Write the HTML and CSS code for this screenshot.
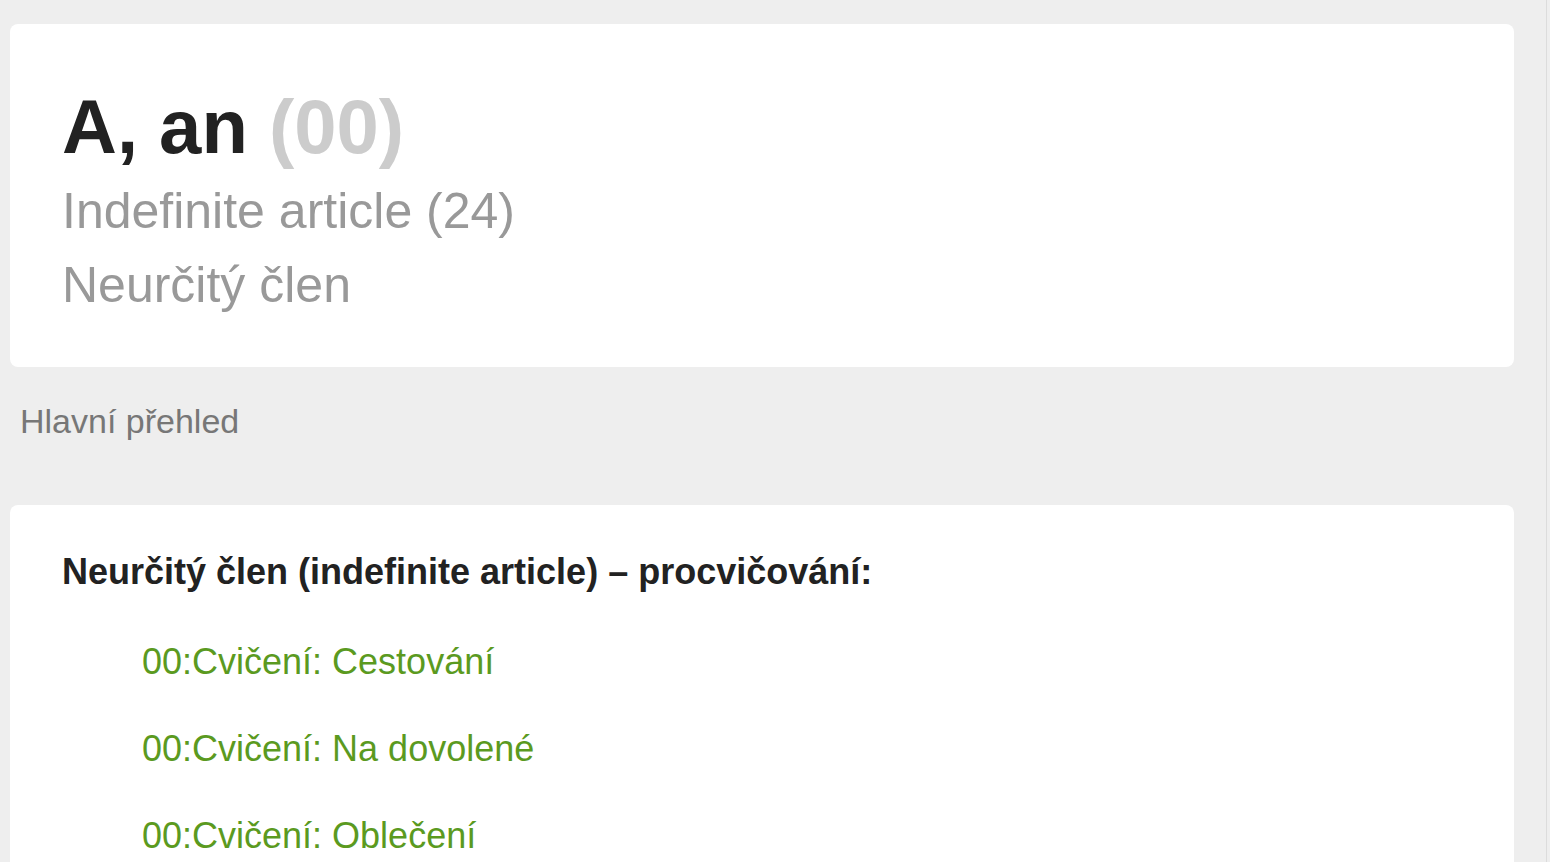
FILE: index.html
```html
<!DOCTYPE html>
<html lang="cs">
<head>
<meta charset="utf-8">
<title>A, an</title>
<link rel="stylesheet" href="styles.css">
</head>
<body>
<div class="page">
  <section class="card card-head">
    <h1 class="title">A, an <span class="count">(00)</span></h1>
    <div class="sub">Indefinite article (24)</div>
    <div class="sub">Neurčitý člen</div>
  </section>
  <div class="crumb">Hlavní přehled</div>
  <section class="card card-list">
    <h2 class="heading">Neurčitý člen (indefinite article) – procvičování:</h2>
    <ul class="links">
      <li><a href="#">00:Cvičení: Cestování</a></li>
      <li><a href="#">00:Cvičení: Na dovolené</a></li>
      <li><a href="#">00:Cvičení: Oblečení</a></li>
    </ul>
  </section>
</div>
</body>
</html>
```

FILE: styles.css
```css
html, body {
  margin: 0;
  padding: 0;
  background: #eeeeee;
  font-family: "Liberation Sans", Arial, Helvetica, sans-serif;
  height: 100%;
  overflow: hidden;
}

.page {
  box-sizing: border-box;
  width: 1547px;
  min-height: 100%;
  border-right: 1px solid #dcdcdc;
  padding: 24px 0 0 10px;
}

.card {
  box-sizing: border-box;
  width: 1504px;
  background: #ffffff;
  border-radius: 8px;
  padding-left: 52px;
}

.card-head {
  padding-top: 55px;
  padding-bottom: 45px;
}

.title {
  margin: 0;
  font-size: 76px;
  line-height: 95px;
  font-weight: bold;
  color: #222222;
}

.count {
  color: #cccccc;
}

.sub {
  font-size: 50px;
  line-height: 74px;
  color: #999999;
}

.crumb {
  margin-top: 34px;
  margin-bottom: 64px;
  padding-left: 10px;
  font-size: 34px;
  line-height: 40px;
  color: #777777;
}

.card-list {
  padding-top: 47px;
  padding-bottom: 40px;
}

.heading {
  margin: 0;
  font-size: 36px;
  line-height: 40px;
  font-weight: bold;
  color: #222222;
}

.links {
  list-style: none;
  margin: 49px 0 0 0;
  padding: 0 0 0 80px;
}

.links li {
  font-size: 36px;
  line-height: 41px;
  margin-bottom: 46px;
}

.links a {
  color: #5b9a1f;
  text-decoration: none;
}
```
